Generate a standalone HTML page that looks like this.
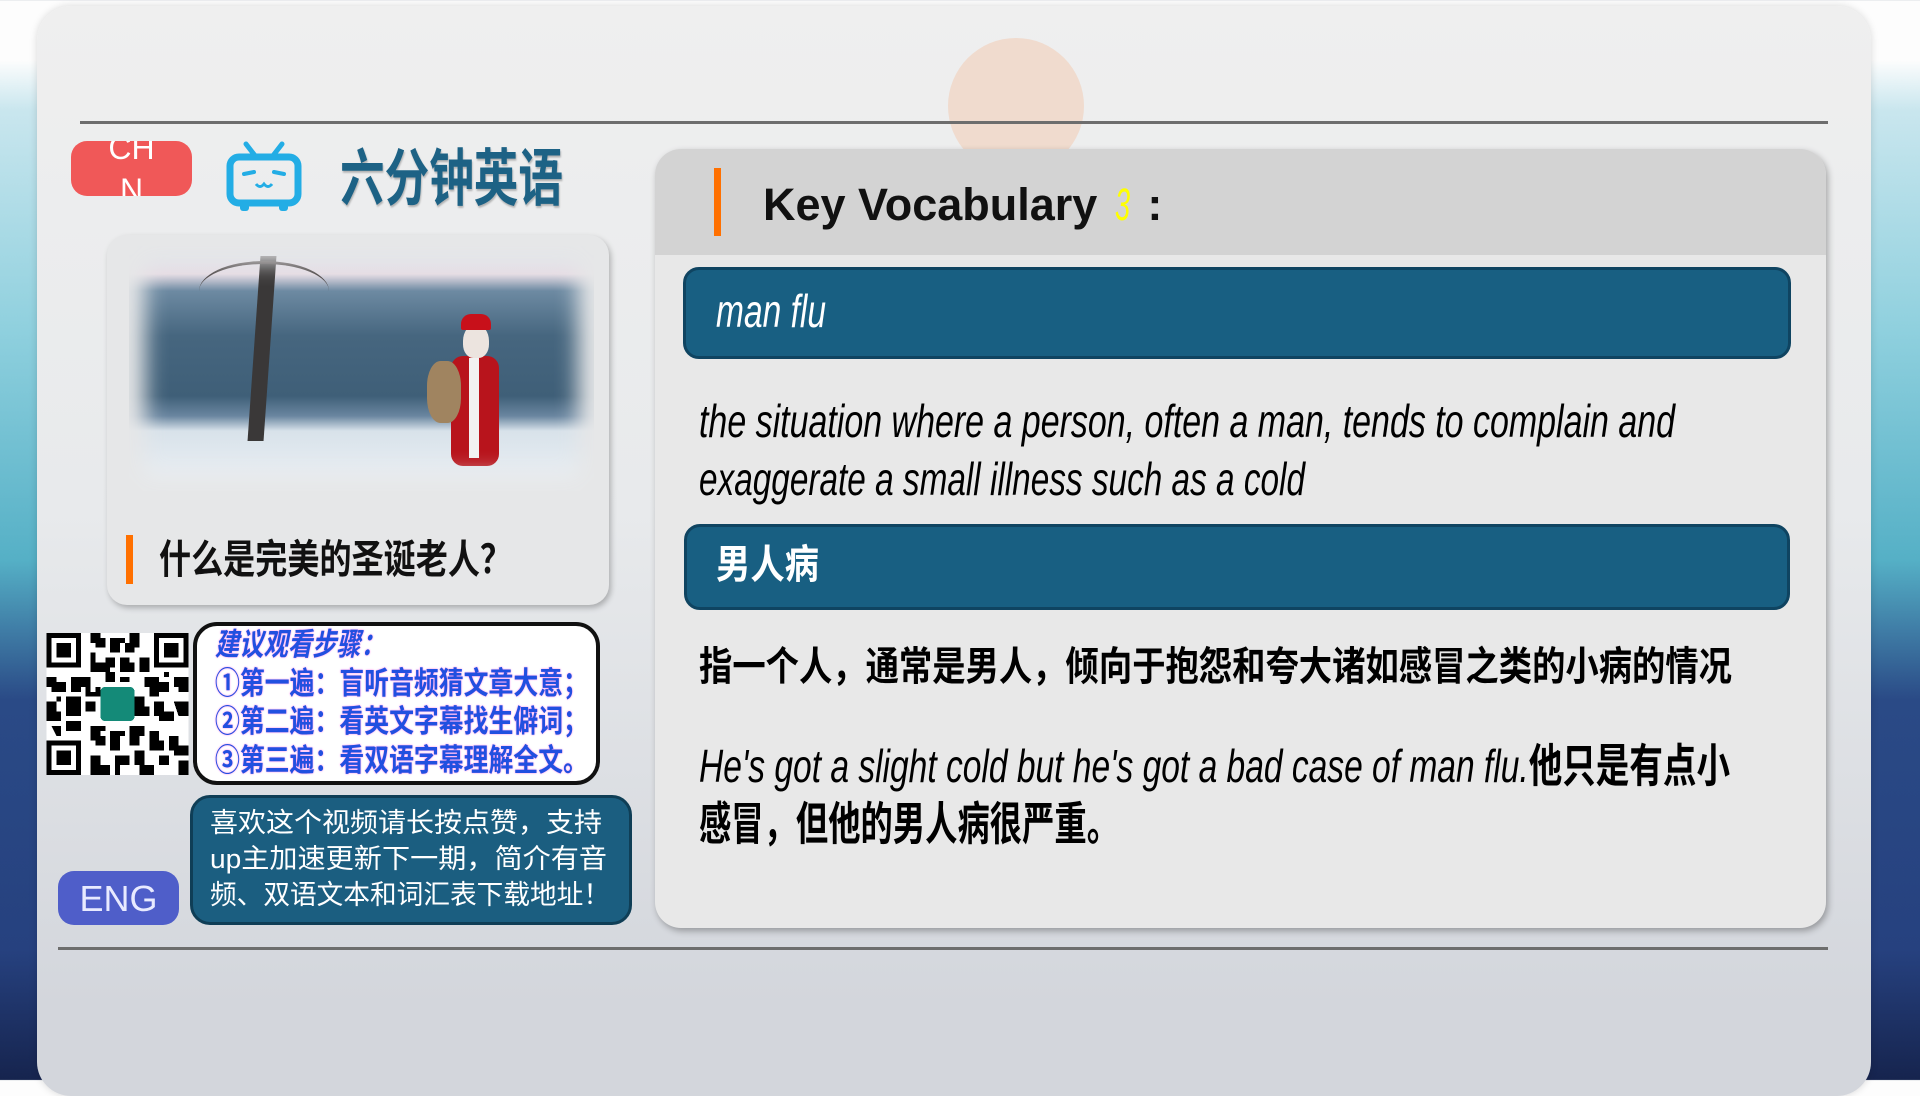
<!DOCTYPE html>
<html><head><meta charset="utf-8">
<style>
*{margin:0;padding:0;box-sizing:border-box}
body{width:1920px;height:1080px;overflow:hidden;position:relative;font-family:"Liberation Sans","Noto Sans CJK SC",sans-serif;
background:linear-gradient(180deg,#fdfdfd 0,#fdfdfd 60px,#c9e6ee 110px,#8fd0de 330px,#55b0c6 560px,#2a4a86 700px,#26417f 950px,#16244e 1080px);}
.abs{position:absolute}
.card{left:37px;top:6px;width:1834px;height:1090px;border-radius:34px;background:linear-gradient(180deg,#efefef 0,#e8eaec 500px,#d3d6dc 1000px);box-shadow:0 0 8px rgba(0,0,0,.15)}
.fit{display:inline-block;white-space:nowrap;transform-origin:0 50%}
</style></head><body>
<div class="abs card"></div>
<div class="abs" style="left:948px;top:38px;width:136px;height:136px;border-radius:50%;background:#f0d6c6;opacity:.8"></div>
<div class="abs" style="left:80px;top:121px;width:1748px;height:3px;background:#6d6d6d"></div>
<div class="abs" style="left:58px;top:947px;width:1770px;height:3px;background:#6d6d6d"></div>

<!-- CHN -->
<div class="abs" style="left:71px;top:141px;width:121px;height:55px;border-radius:16px;background:#f05858;overflow:hidden;color:#fff;font-size:32px;text-align:center;line-height:42px">
<div style="margin-top:-14px">CH<br>N</div></div>
<!-- bili icon -->
<svg class="abs" style="left:226px;top:140px" width="76" height="74" viewBox="0 0 76 74">
<path d="M20 4 L30 17 M56 4 L46 17" stroke="#23ade5" stroke-width="5" stroke-linecap="round"/>
<rect x="4" y="17" width="68" height="46" rx="9" fill="none" stroke="#23ade5" stroke-width="7"/>
<path d="M18 34 L28 32 M48 32 L58 34" stroke="#23ade5" stroke-width="4" stroke-linecap="round"/>
<path d="M30 44 q4 5 8 0 q4 5 8 0" stroke="#23ade5" stroke-width="3" fill="none"/>
<rect x="14" y="62" width="9" height="9" rx="3" fill="#23ade5"/><rect x="53" y="62" width="9" height="9" rx="3" fill="#23ade5"/>
</svg>
<div class="abs" style="left:340px;top:144px;color:#1d6285;font-size:62px;font-weight:bold;line-height:72px;text-shadow:1px 2px 2px rgba(0,0,0,.25)"><span class="fit" style="--w:223px">六分钟英语</span></div>

<!-- image card -->
<div class="abs" style="left:107px;top:235px;width:502px;height:370px;border-radius:20px;background:#e6e7e8;box-shadow:2px 3px 6px rgba(0,0,0,.25)"></div>
<div class="abs" style="left:129px;top:246px;width:465px;height:245px;overflow:hidden;
background:linear-gradient(180deg,#dfe6ee 0,#e6dce4 28px,#6d8aa2 45px,#46667f 90px,#3f5f78 150px,#6a86a0 170px,#d8e2ea 185px,#eef2f6 245px)">
<div class="abs" style="left:125px;top:10px;width:16px;height:185px;background:#3a3838;transform:skewX(-4deg)"></div>
<div class="abs" style="left:70px;top:15px;width:130px;height:60px;border-top:3px solid #4a4444;border-radius:50%"></div>
<div class="abs" style="left:322px;top:110px;width:48px;height:110px;background:#b8141c;border-radius:12px"></div>
<div class="abs" style="left:340px;top:112px;width:10px;height:100px;background:#f2f2f2"></div>
<div class="abs" style="left:334px;top:78px;width:26px;height:34px;background:#ece4df;border-radius:50% 50% 40% 40%"></div>
<div class="abs" style="left:332px;top:68px;width:30px;height:16px;background:#c8101a;border-radius:10px 10px 2px 2px"></div>
<div class="abs" style="left:298px;top:115px;width:34px;height:62px;background:#a08460;border-radius:40%"></div>
<div class="abs" style="left:0;top:0;width:465px;height:245px;box-shadow:inset 0 0 22px 16px #e6e7e8"></div>
</div>
<div class="abs" style="left:126px;top:535px;width:7px;height:49px;background:#ff7000"></div>
<div class="abs" style="left:159px;top:534px;font-size:40px;font-weight:bold;color:#111;line-height:52px"><span class="fit" style="--w:353px">什么是完美的圣诞老人？</span></div>

<!-- QR -->
<svg class="abs" style="left:45px;top:633px" width="145" height="142" viewBox="0 0 29 29" shape-rendering="crispEdges">
<rect width="29" height="29" fill="#fff"/>
<g fill="#000">
<rect x="0" y="0" width="7" height="7"/><rect x="22" y="0" width="7" height="7"/><rect x="0" y="22" width="7" height="7"/>
<path d="M9 0h2v1h1v2h-2v-1h-1zM13 1h3v1h-1v2h-2zM17 0h2v3h-1v1h-2v-2h1zM9 4h1v2h2v2h-3zM12 5h2v2h-1v1h-1zM15 5h2v1h1v2h-3zM19 5h2v3h-2zM0 9h2v1h2v2h-3v-1h-1zM5 9h3v2h-1v1h-2zM20 9h3v1h2v2h-2v1h-2v-2h-1zM26 9h3v3h-2v-1h-1zM0 14h2v2h1v2h-3zM4 13h3v2h-1v2h-2zM22 14h2v2h2v2h-3v-1h-1zM26 14h3v3h-2zM1 19h2v2h-1zM4 18h3v2h-3zM9 19h2v2h1v2h-2v-1h-1zM13 20h3v1h-1v3h-2zM17 19h3v2h-1v2h-2zM21 20h2v2h1v2h-3zM25 21h2v2h2v2h-3v-1h-1zM9 25h2v2h2v2h-4zM14 25h3v2h-2v2h-1zM18 24h2v3h2v2h-3v-2h-1zM23 25h2v2h-2zM27 26h2v3h-2zM8 9h1v3h1v-1h1v2h-3zM12 8h2v2h-2zM15 9h2v1h-2zM8 14h2v2h-2zM18 13h2v2h1v2h-3zM11 19h1v1h-1zM6 14h1v3h-1zM24 8h1v1h-1zM2 13h1v1h-1z"/>
</g>
<g fill="#fff"><rect x="1" y="1" width="5" height="5"/><rect x="23" y="1" width="5" height="5"/><rect x="1" y="23" width="5" height="5"/></g>
<g fill="#000"><rect x="2" y="2" width="3" height="3"/><rect x="24" y="2" width="3" height="3"/><rect x="2" y="24" width="3" height="3"/></g>
<rect x="11" y="11" width="7" height="7" rx="1" fill="#148a78"/>
</svg>

<!-- steps -->
<div class="abs" style="left:193px;top:622px;width:407px;height:163px;border:4px solid #111;border-radius:24px;background:#fff"></div>
<div class="abs" style="left:215px;top:626px;color:#2150e0;font-size:31px;font-weight:bold;line-height:38.5px;text-shadow:0 0 2px #ff70e8">
<span class="fit" style="--w:170px;font-style:italic">建议观看步骤：</span><br>
<span class="fit" style="--w:373px">①第一遍：盲听音频猜文章大意；</span><br>
<span class="fit" style="--w:373px">②第二遍：看英文字幕找生僻词；</span><br>
<span class="fit" style="--w:373px">③第三遍：看双语字幕理解全文。</span></div>

<!-- blue box -->
<div class="abs" style="left:190px;top:795px;width:442px;height:130px;border:3px solid #0f3e56;border-radius:20px;background:#1b5e80"></div>
<div class="abs" style="left:210px;top:805px;color:#fff;font-size:27px;line-height:36px">
<span class="fit" style="--w:392px">喜欢这个视频请长按点赞，支持</span><br>
<span class="fit" style="--w:397px">up主加速更新下一期，简介有音</span><br>
<span class="fit" style="--w:400px">频、双语文本和词汇表下载地址！</span></div>
<div class="abs" style="left:58px;top:871px;width:121px;height:54px;border-radius:16px;background:#4f5ec9;color:#e8eaff;font-size:36px;text-align:center;line-height:56px">ENG</div>

<!-- right card -->
<div class="abs" style="left:655px;top:149px;width:1171px;height:779px;border-radius:26px;background:#e8e8e8;box-shadow:2px 3px 7px rgba(0,0,0,.3);overflow:hidden">
<div style="height:106px;background:#d3d3d3"></div></div>
<div class="abs" style="left:714px;top:168px;width:7px;height:68px;background:#ff7000"></div>
<div class="abs" style="left:763px;top:178px;font-size:45px;font-weight:bold;color:#111;line-height:54px">Key Vocabulary <span style="color:#ffff00;font-weight:normal;font-style:italic;display:inline-block;transform:scaleX(.6)">3</span> :</div>
<div class="abs" style="left:683px;top:267px;width:1108px;height:92px;border:3px solid #0f4461;border-radius:16px;background:#185f82"></div>
<div class="abs" style="left:716px;top:284px;color:#fff;font-size:46px;font-style:italic;line-height:54px"><span class="fit" style="--w:110px">man flu</span></div>
<div class="abs" style="left:699px;top:392px;color:#000;font-size:46px;font-style:italic;line-height:58px">
<span class="fit" style="--w:976px">the situation where a person, often a man, tends to complain and</span><br>
<span class="fit" style="--w:606px">exaggerate a small illness such as a cold</span></div>
<div class="abs" style="left:684px;top:524px;width:1106px;height:86px;border:3px solid #0f4461;border-radius:16px;background:#185f82"></div>
<div class="abs" style="left:716px;top:540px;color:#fff;font-size:40px;font-weight:bold;line-height:50px"><span class="fit" style="--w:103px">男人病</span></div>
<div class="abs" style="left:699px;top:640px;color:#000;font-size:40px;font-weight:bold;line-height:54px"><span class="fit" style="--w:1033px">指一个人，通常是男人，倾向于抱怨和夸大诸如感冒之类的小病的情况</span></div>
<div class="abs" style="left:699px;top:737px;color:#000;font-size:46px;line-height:58px">
<span class="fit" style="--w:1031px"><i>He's got a slight cold but he's got a bad case of man flu.</i><b>他只是有点小</b></span><br>
<span class="fit" style="--w:420px;font-weight:bold">感冒，但他的男人病很严重。</span></div>

<script>
document.querySelectorAll('.fit').forEach(function(e){
 var w=parseFloat(getComputedStyle(e).getPropertyValue('--w'));
 var r=e.getBoundingClientRect().width;
 if(w&&r) e.style.transform='scaleX('+(w/r)+')';
});
</script>
</body></html>
